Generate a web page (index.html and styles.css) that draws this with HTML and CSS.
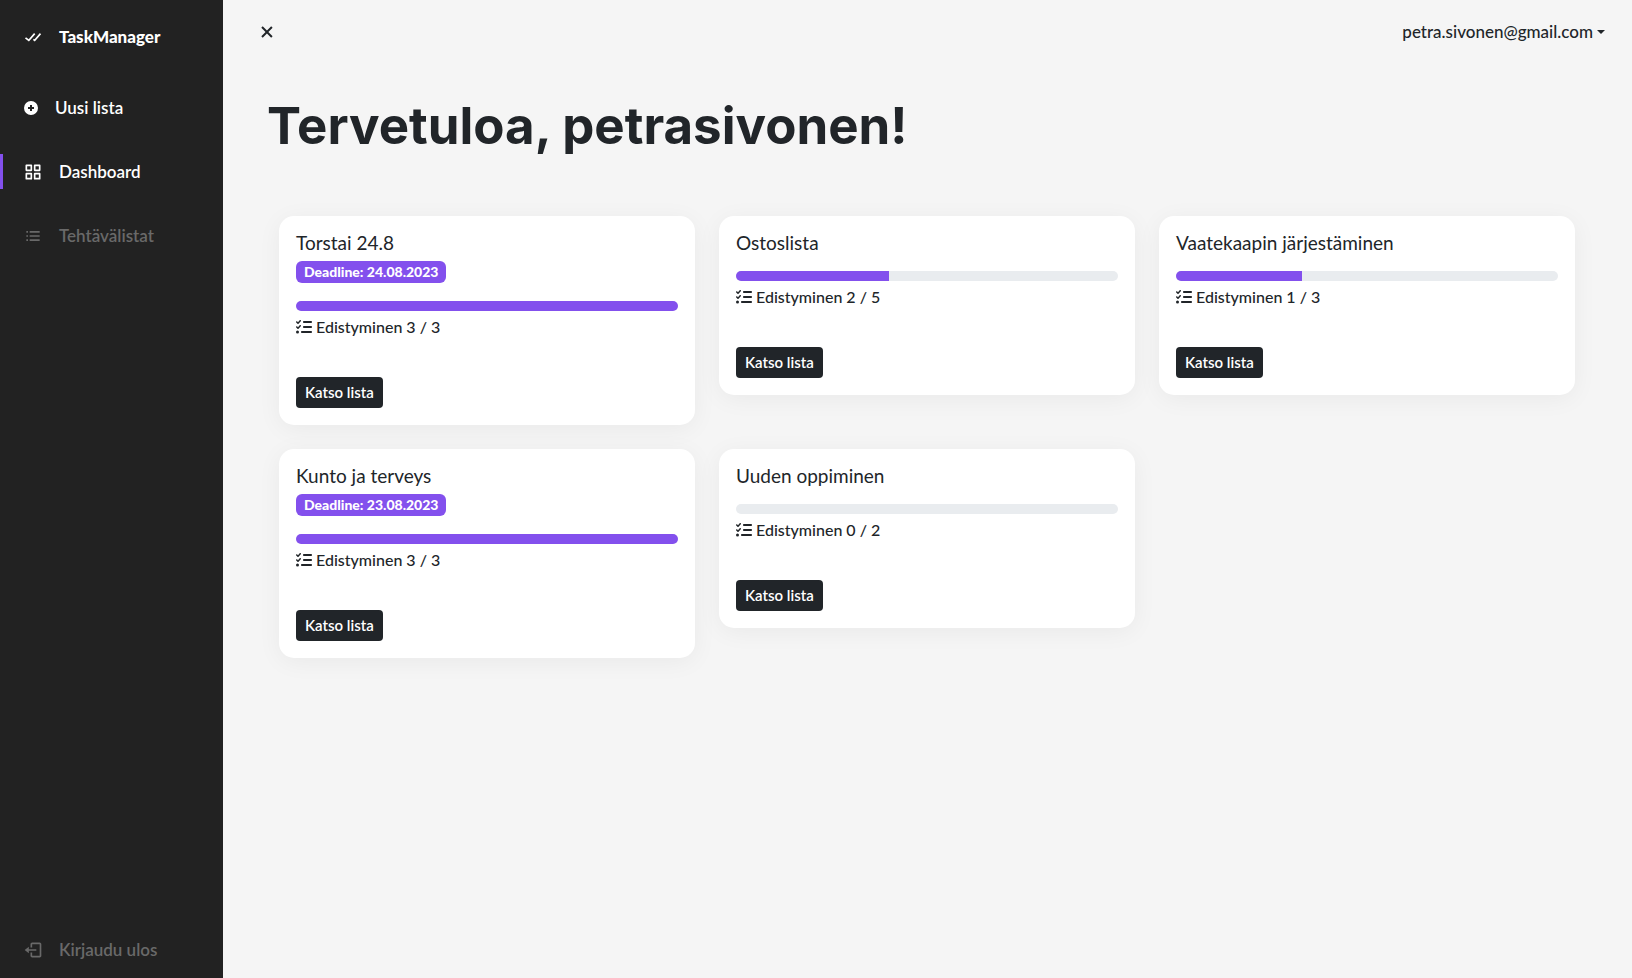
FILE: index.html
```
<!DOCTYPE html>
<html lang="fi">
<head>
<meta charset="utf-8">
<title>TaskManager</title>
<link rel="stylesheet" href="styles.css">
</head>
<body>
<svg class="sprite" aria-hidden="true">
  <symbol id="tasks" viewBox="0 0 512 512"><path d="M152.1 38.2c9.9 8.9 10.7 24 1.8 33.9l-72 80c-4.4 4.9-10.6 7.8-17.2 7.9s-12.9-2.4-17.6-7L7 113C-2.3 103.6-2.3 88.4 7 79s24.6-9.4 33.9 0l22.1 22.1 55.1-61.2c8.9-9.9 24-10.7 33.9-1.8zm0 160c9.9 8.9 10.7 24 1.8 33.9l-72 80c-4.4 4.9-10.6 7.8-17.2 7.9s-12.9-2.4-17.6-7L7 273c-9.4-9.4-9.4-24.6 0-33.9s24.6-9.4 33.9 0l22.1 22.1 55.1-61.2c8.9-9.9 24-10.7 33.9-1.8zM224 96c0-17.7 14.3-32 32-32H480c17.7 0 32 14.3 32 32s-14.3 32-32 32H256c-17.7 0-32-14.3-32-32zm0 160c0-17.7 14.3-32 32-32H480c17.7 0 32 14.3 32 32s-14.3 32-32 32H256c-17.7 0-32-14.3-32-32zM160 416c0-17.7 14.3-32 32-32H480c17.7 0 32 14.3 32 32s-14.3 32-32 32H192c-17.7 0-32-14.3-32-32zM48 368a48 48 0 1 1 0 96 48 48 0 1 1 0-96z"/></symbol>
</svg>
<div class="app">
  <nav class="sidebar">
    <a class="nav-link brand" href="#"><svg class="nav-icon" viewBox="0 0 24 24"><path d="m2.394 13.742 4.743 3.62 7.616-8.704-1.506-1.316-6.384 7.296-3.257-2.486zm19.359-5.084-1.506-1.316-6.369 7.279-.753-.602-1.25 1.562 2.247 1.798z"/></svg>TaskManager</a>
    <div class="nav-list">
      <button class="nav-link nav-new" type="button"><svg class="nav-icon nav-icon-small" viewBox="0 0 16 16"><path fill-rule="evenodd" d="M8 1a7 7 0 1 0 0 14A7 7 0 0 0 8 1zM7 5h2v2h2v2H9v2H7V9H5V7h2z"/></svg>Uusi lista</button>
      <a class="nav-link active" href="#"><svg class="nav-icon" viewBox="0 0 24 24"><path fill-rule="evenodd" d="M4 3h6a1 1 0 0 1 1 1v6a1 1 0 0 1-1 1H4a1 1 0 0 1-1-1V4a1 1 0 0 1 1-1zm1 2v4h4V5zM14 3h6a1 1 0 0 1 1 1v6a1 1 0 0 1-1 1h-6a1 1 0 0 1-1-1V4a1 1 0 0 1 1-1zm1 2v4h4V5zM4 13h6a1 1 0 0 1 1 1v6a1 1 0 0 1-1 1H4a1 1 0 0 1-1-1v-6a1 1 0 0 1 1-1zm1 2v4h4v-4zM14 13h6a1 1 0 0 1 1 1v6a1 1 0 0 1-1 1h-6a1 1 0 0 1-1-1v-6a1 1 0 0 1 1-1zm1 2v4h4v-4z"/></svg>Dashboard</a>
      <a class="nav-link muted" href="#"><svg class="nav-icon" viewBox="0 0 24 24"><path d="M4 6h2v2H4zm0 5h2v2H4zm0 5h2v2H4zM8 6h12v2H8zm0 5h12v2H8zm0 5h12v2H8z"/></svg>Tehtävälistat</a>
    </div>
    <a class="nav-link muted" href="#"><svg class="nav-icon" viewBox="0 0 24 24"><path d="m2 12 5 4v-3h9v-2H7V8z"/><path d="M20 3h-9c-1.103 0-2 .897-2 2v4h2V5h9v14h-9v-4H9v4c0 1.103.897 2 2 2h9c1.103 0 2-.897 2-2V5c0-1.103-.897-2-2-2z"/></svg>Kirjaudu ulos</a>
  </nav>
  <main class="main">
    <header class="topbar">
      <button class="toggle" type="button" aria-label="Sulje valikko"><svg class="toggle-icon" viewBox="0 0 24 24"><path d="m16.192 6.344-4.243 4.242-4.242-4.242-1.414 1.414L10.535 12l-4.242 4.242 1.414 1.414 4.242-4.242 4.243 4.242 1.414-1.414L13.364 12l4.242-4.242z"/></svg></button>
      <button class="user" type="button">petra.sivonen@gmail.com<span class="caret"></span></button>
    </header>
    <h1 class="welcome">Tervetuloa, petrasivonen!</h1>
    <section class="cards">
      <article class="card">
        <h2 class="card-title">Torstai 24.8</h2>
        <span class="badge">Deadline: 24.08.2023</span>
        <div class="progress"><div class="bar" style="width:100%"></div></div>
        <p class="status"><svg class="status-icon"><use href="#tasks"/></svg>Edistyminen 3 / 3</p>
        <a class="button" href="#">Katso lista</a>
      </article>
      <article class="card">
        <h2 class="card-title">Ostoslista</h2>
        <div class="progress"><div class="bar" style="width:40%"></div></div>
        <p class="status"><svg class="status-icon"><use href="#tasks"/></svg>Edistyminen 2 / 5</p>
        <a class="button" href="#">Katso lista</a>
      </article>
      <article class="card">
        <h2 class="card-title">Vaatekaapin järjestäminen</h2>
        <div class="progress"><div class="bar" style="width:33%"></div></div>
        <p class="status"><svg class="status-icon"><use href="#tasks"/></svg>Edistyminen 1 / 3</p>
        <a class="button" href="#">Katso lista</a>
      </article>
      <article class="card">
        <h2 class="card-title">Kunto ja terveys</h2>
        <span class="badge">Deadline: 23.08.2023</span>
        <div class="progress"><div class="bar" style="width:100%"></div></div>
        <p class="status"><svg class="status-icon"><use href="#tasks"/></svg>Edistyminen 3 / 3</p>
        <a class="button" href="#">Katso lista</a>
      </article>
      <article class="card">
        <h2 class="card-title">Uuden oppiminen</h2>
        <div class="progress"><div class="bar" style="width:0%"></div></div>
        <p class="status"><svg class="status-icon"><use href="#tasks"/></svg>Edistyminen 0 / 2</p>
        <a class="button" href="#">Katso lista</a>
      </article>
    </section>
  </main>
</div>
</body>
</html>
```
FILE: styles.css
```
* { box-sizing: border-box; }
body {
  margin: 0;
  background: #f5f5f5;
  color: #212529;
  font: 500 16px/24px Lato, sans-serif;
}
button { border: 0; background: none; padding: 0; font: inherit; color: inherit; cursor: pointer; }
a { color: inherit; text-decoration: none; }
svg { fill: currentColor; flex: none; }
.sprite { display: none; }

.app { display: flex; min-height: 100vh; }

.sidebar {
  flex: none;
  width: 223px;
  padding: 19px 0 11px;
  display: flex;
  flex-direction: column;
  background: #222;
  color: #fff;
}
.nav-link {
  display: flex;
  align-items: center;
  gap: 16px;
  height: 35px;
  padding-left: 20px;
  border-left: 3px solid transparent;
  font-size: 17px;
  font-weight: 600;
}
.brand { font-weight: 900; }
.nav-list {
  flex: 1;
  display: flex;
  flex-direction: column;
  gap: 29px;
  padding-top: 36px;
}
.nav-icon { width: 20px; height: 20px; }
.nav-icon-small { width: 16px; height: 16px; }
.active { border-left-color: #8350ed; }
.muted { color: #696969; }

.main { flex: 1; min-width: 0; padding: 0 57px 24px 44px; }
.topbar {
  display: flex;
  justify-content: space-between;
  align-items: center;
  height: 64px;
  margin: 0 -30px 0 -12px;
}
.toggle { display: flex; }
.toggle-icon { width: 24px; height: 24px; }
.user { display: flex; align-items: center; gap: 4px; font-size: 17px; }
.caret {
  border-top: 4px solid;
  border-left: 4px solid transparent;
  border-right: 4px solid transparent;
}
.welcome { margin: 33px 0 61px; padding-right: 1px; font: 700 51px/58px Inter, sans-serif; }

.cards {
  display: grid;
  grid-template-columns: repeat(3, 1fr);
  align-items: start;
  gap: 24px;
  padding-left: 12px;
}
.card {
  display: flex;
  flex-direction: column;
  align-items: flex-start;
  padding: 17px;
  border-radius: 15px;
  background: #fff;
  box-shadow: 0 4px 24px rgba(0, 0, 0, 0.05);
}
.card-title { margin: 0 0 8px; font-size: 19px; line-height: 20px; font-weight: 400; }
.badge {
  margin-bottom: 8px;
  padding: 0 8px;
  border-radius: 6px;
  background: #8350ed;
  color: #fff;
  font-size: 14px;
  line-height: 22px;
  font-weight: 900;
}
.progress {
  width: 100%;
  height: 10px;
  margin-top: 10px;
  border-radius: 6px;
  overflow: hidden;
  background: #e9ecef;
}
.bar { height: 100%; background: #8350ed; }
.status { display: flex; align-items: center; gap: 4px; margin: 4px 0 38px; font-size: 16px; }
.status-icon { width: 16px; height: 16px; }
.button {
  padding: 0 9px;
  border-radius: 4px;
  background: #212529;
  color: #fff;
  font-size: 15px;
  line-height: 31px;
  font-weight: 600;
}
```
